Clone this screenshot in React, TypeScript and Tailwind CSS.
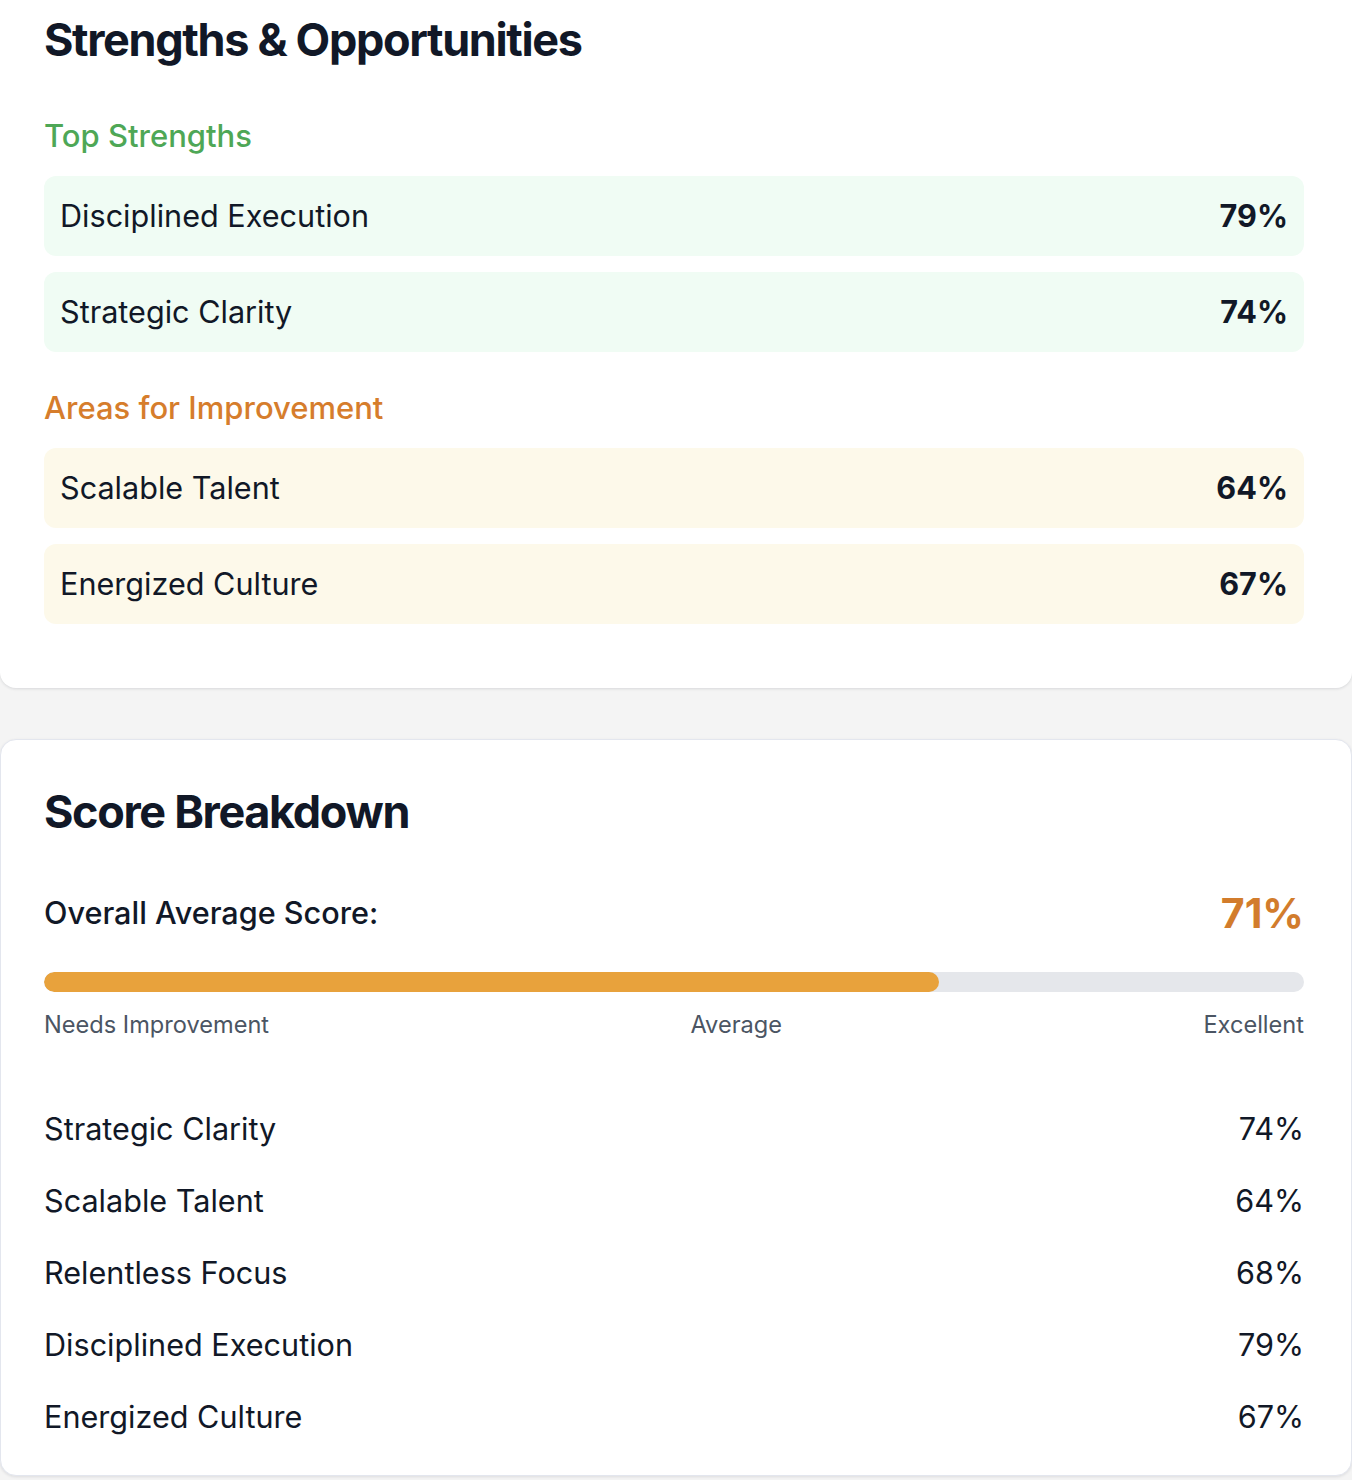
const strengths = [
  { name: "Disciplined Execution", score: 79 },
  { name: "Strategic Clarity", score: 74 },
];

const improvements = [
  { name: "Scalable Talent", score: 64 },
  { name: "Energized Culture", score: 67 },
];

const breakdown = [
  { name: "Strategic Clarity", score: 74 },
  { name: "Scalable Talent", score: 64 },
  { name: "Relentless Focus", score: 68 },
  { name: "Disciplined Execution", score: 79 },
  { name: "Energized Culture", score: 67 },
];

const overall = 71;

const ScoreBox = ({ name, score, tone }: { name: string; score: number; tone: "green" | "yellow" }) => (
  <div
    className={`flex h-[80px] items-center justify-between rounded-xl px-4 ${
      tone === "green" ? "bg-[#f0fcf4]" : "bg-[#fdf9ea]"
    }`}
  >
    <span className="text-[30.6px] leading-9 text-[#111827]">{name}</span>
    <span className="text-[30.6px] font-bold leading-9 text-[#111827]">{score}%</span>
  </div>
);

export default function App() {
  return (
    <div className="min-h-[1480px] bg-[#f4f4f4] font-['Inter',sans-serif] text-[#111827]">
      {/* Strengths card */}
      <section className="rounded-b-2xl bg-white pb-16 pl-[44px] pr-[48px] pt-4 shadow-[0_1px_3px_rgba(15,23,42,0.12)]">
        <h2 className="text-[45px] font-bold leading-[48px] tracking-[-0.03em] text-[#111827]">
          Strengths &amp; Opportunities
        </h2>

        <h3 className="mt-[54px] text-[31px] font-medium leading-9 text-[#4ea756]">Top Strengths</h3>
        <div className="mt-[22px] flex flex-col gap-4">
          {strengths.map((s) => (
            <ScoreBox key={s.name} name={s.name} score={s.score} tone="green" />
          ))}
        </div>

        <h3 className="mt-[38px] text-[31px] font-medium leading-9 text-[#d67d2c]">Areas for Improvement</h3>
        <div className="mt-[22px] flex flex-col gap-4">
          {improvements.map((s) => (
            <ScoreBox key={s.name} name={s.name} score={s.score} tone="yellow" />
          ))}
        </div>
      </section>

      {/* Score breakdown card */}
      <section className="mt-[51px] rounded-2xl border border-[#e3e6ee] bg-white pb-10 pl-[43px] pr-[47px] pt-12 shadow-[0_1px_3px_rgba(15,23,42,0.1)]">
        <h2 className="text-[45px] font-bold leading-[48px] tracking-[-0.03em] text-[#111827]">Score Breakdown</h2>

        <div className="mt-[53px] flex h-12 items-center justify-between">
          <span className="text-[30.6px] font-medium leading-9">Overall Average Score:</span>
          <span className="text-[41px] font-bold leading-[48px] text-[#d27c2c]">{overall}%</span>
        </div>

        <div className="mt-[35px] h-5 w-full overflow-hidden rounded-full bg-[#e5e7eb]">
          <div className="h-full rounded-full bg-[#e8a23c]" style={{ width: `${overall}%` }} />
        </div>
        <div className="mt-[17px] flex justify-between text-[23.6px] leading-8 text-[#4b5563]">
          <span>Needs Improvement</span>
          <span>Average</span>
          <span>Excellent</span>
        </div>

        <div className="mt-[70px] flex flex-col gap-9">
          {breakdown.map((b) => (
            <div key={b.name} className="flex items-center justify-between text-[30.6px] leading-9">
              <span>{b.name}</span>
              <span>{b.score}%</span>
            </div>
          ))}
        </div>
      </section>
    </div>
  );
}
